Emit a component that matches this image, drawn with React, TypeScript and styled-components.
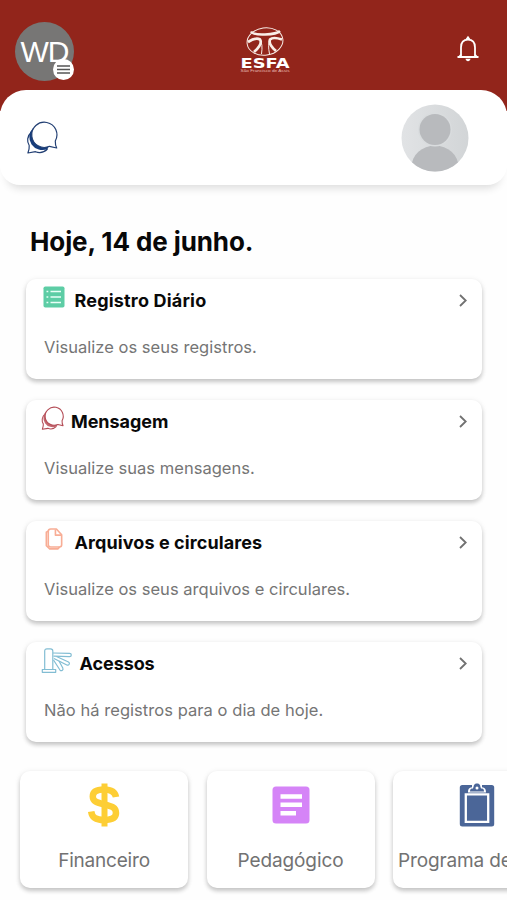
import React from "react";
import styled, { createGlobalStyle } from "styled-components";

const GlobalStyle = createGlobalStyle`
  * { box-sizing: border-box; }
  html, body { margin: 0; padding: 0; background: #fefefe; overflow: hidden; }
  body { font-family: Inter, "Liberation Sans", sans-serif; }
  svg { display: block; flex: none; overflow: visible; }
`;

const Screen = styled.main`
  width: 507px;
  height: 900px;
  overflow: hidden;
  display: flex;
  flex-direction: column;
  background: #fefefe;
`;

const Header = styled.header`
  height: 111px;
  flex: none;
  padding: 22px 26px 0 15px;
  display: grid;
  grid-template-columns: 60px 1fr 60px;
  align-items: start;
  background: #92251b;
`;

const Account = styled.button`
  position: relative;
  width: 59px;
  height: 59px;
  border: 0;
  padding: 0;
  border-radius: 50%;
  background: #777675;
  color: #fff;
  font: 400 30px/58px "Liberation Sans", sans-serif;
  letter-spacing: -1px;
`;

const MenuBadge = styled.span`
  position: absolute;
  right: 0;
  bottom: 1px;
  width: 21px;
  height: 21px;
  border-radius: 50%;
  background: #fff;
  display: grid;
  place-items: center;
`;

const Brand = styled.div`
  justify-self: center;
  margin: 5px 0 0 34px;
`;

const Bell = styled.div`
  justify-self: end;
  margin: 14px 2px 0 0;
`;

const Panel = styled.section`
  height: 95px;
  flex: none;
  margin-top: -21px;
  padding: 0 38px 0 26px;
  display: flex;
  align-items: center;
  justify-content: space-between;
  background: #fff;
  border-radius: 26px 26px 20px 20px;
  box-shadow: 0 10px 9px -7px rgba(0, 0, 0, 0.14);
`;

const Today = styled.h1`
  margin: 40px 0 0 30px;
  font-size: 26px;
  line-height: 34px;
  font-weight: 700;
  letter-spacing: -0.1px;
  color: #080808;
`;

const CardList = styled.div`
  display: flex;
  flex-direction: column;
  gap: 21px;
  margin: 20px 25px 0 26px;
`;

const raised = "0 3px 4px rgba(0,0,0,.19), 0 1px 6px rgba(0,0,0,.08)";

const Card = styled.article`
  height: 100px;
  border-radius: 10px;
  background: #fff;
  box-shadow: ${raised};
  padding: 7px 15px 0 15px;
`;

const CardHead = styled.div`
  display: flex;
  align-items: flex-start;
  height: 49px;
`;

const CardTitle = styled.h2<{ $gap: number; $tracking: number }>`
  flex: 1;
  margin: 3px 0 0 ${(p) => p.$gap}px;
  font-size: 18px;
  line-height: 24px;
  font-weight: 650;
  letter-spacing: ${(p) => p.$tracking}px;
  color: #090909;
`;

const ChevronSlot = styled.span`
  margin-top: 8px;
`;

const CardText = styled.p<{ $tracking: number }>`
  margin: 0 0 0 3px;
  font-size: 16.5px;
  line-height: 24px;
  letter-spacing: ${(p) => p.$tracking}px;
  color: #757575;
`;

const Shortcuts = styled.nav`
  display: flex;
  gap: 18.5px;
  margin: 29px 0 0 20px;
`;

const Shortcut = styled.div`
  width: 168px;
  height: 117px;
  flex: none;
  border-radius: 10px;
  background: #fff;
  box-shadow: ${raised};
  display: flex;
  flex-direction: column;
  align-items: center;
  padding-top: 12px;
`;

const ShortcutLabel = styled.span<{ $tracking: number }>`
  margin-top: 21px;
  font-size: 19px;
  line-height: 26px;
  letter-spacing: ${(p) => p.$tracking}px;
  white-space: nowrap;
  color: #727272;
`;

const ChatIcon = ({ size, color, stroke, shade }: { size: number; color: string; stroke: number; shade: string }) => (
  <svg width={size} height={size} viewBox="0 0 32 32" fill="none" stroke={color} strokeWidth={stroke} strokeLinejoin="round">
    <path d="M5.500 10C.800 14 .800 20 3.200 23.500C3.500 26.500 2.900 28.500 1.900 31L9.500 29.700C14 31.500 18.500 30 21.500 27" />
    <path d="M7 6A13 13 0 0 0 21.500 27L23 24L9 9Z" fill={shade} stroke="none" />
    <path d="M29.300 19A12.600 12.600 0 1 0 23.500 24.300L30.700 26C29.600 23.800 29.200 21.500 29.300 19Z" fill="#fff" />
  </svg>
);

const RegisterIcon = () => (
  <svg width="22" height="22" viewBox="0 0 22 22">
    <rect x=".5" y=".5" width="21" height="21" rx="1.800" fill="#5dcda5" />
    <g stroke="#e9fff7" strokeWidth="1.400">
      <path d="M7.500 5.500H18M7.500 11H18M7.500 16.500H18" />
      <path d="M3.500 5.500H5.300M3.500 11H5.300M3.500 16.500H5.300" />
    </g>
  </svg>
);

const FilesIcon = () => (
  <svg width="18" height="22" viewBox="0 0 18 23" fill="none" stroke="#f8ad95" strokeWidth="1.700" strokeLinejoin="round">
    <path d="M3 3.200L1 4.500V18.500L4.500 21.800H13L15 19.800" />
    <path d="M5.500 1H11.500L17 7V17.500C17 19 16 19.800 14.800 19.800H5.500C4 19.800 3 19 3 17.500V3.500C3 2 4 1 5.500 1Z" />
    <path d="M10.500 1.500V7.500H16.500" />
  </svg>
);

const TurnstileIcon = () => (
  <svg width="31" height="25" viewBox="0 0 31 25" fill="none" stroke="#82bdd3" strokeWidth="1.200" strokeLinejoin="round">
    <path d="M3.700 21V3Q3.700 .800 6 .800H9.500Q11.800 .800 11.800 3V21M1.300 21.500H14.700V24.300H1.300Z" />
    <path d="M12 5L28.500 5.300Q30.300 5.300 30.300 7T28.500 8.700L12.500 8.200" />
    <path d="M15.500 8.500L27.500 14Q29 15 28.200 16.300T25.800 17L13 10.500" />
    <path d="M18 13L21.800 20Q22.500 21.800 21.200 22.500T18.800 21.800L12.500 12" />
  </svg>
);

const Chevron = () => (
  <svg width="8" height="13" viewBox="0 0 8 13" fill="none" stroke="#717171" strokeWidth="1.800">
    <path d="M1 1L6.700 6.500L1 12" />
  </svg>
);

const Logo = () => (
  <svg width="50" height="46" viewBox="0 0 50 46">
    <g fill="none" stroke="#f9eee8">
      <ellipse cx="25" cy="14.500" rx="18" ry="13.700" strokeWidth="1" transform="rotate(-8 25 14.500)" />
      <path d="M11 4.500Q13 8 25 7.500T40 4" strokeWidth="2.500" />
      <path d="M8 15Q16 10 20 12.500Q23 17 14 25M42 12.500Q33 9.500 30 12.500Q28 17 36 24" strokeWidth="2.700" />
      <path d="M20 12.500Q23 17 21.500 27M30 12.500Q27.500 17 29.500 27" strokeWidth="1" />
    </g>
    <text x="25" y="40.500" textAnchor="middle" textLength="49" lengthAdjust="spacingAndGlyphs" fontFamily="DejaVu Sans" fontWeight="700" fontSize="14" fill="#fff">ESFA</text>
    <text x="25" y="45" textAnchor="middle" textLength="49" lengthAdjust="spacingAndGlyphs" fontFamily="Liberation Sans" fontSize="4.200" fill="#e7bcb3">São Francisco de Assis</text>
  </svg>
);

const BellIcon = () => (
  <svg width="22" height="26" viewBox="0 0 22 26" fill="none" stroke="#fff" strokeWidth="1.800">
    <path d="M.500 21H21.500M4 20V11.500C4 6 7 3.700 11 3.700S18 6 18 11.500V20M2.500 20.500L4.500 18M19.500 20.500L17.500 18" />
    <path d="M9.500 3.500L11 1.500L12.500 3.500" strokeWidth="2" />
    <path d="M8.500 22.800H13.500C13.200 26 8.800 26 8.500 22.800Z" fill="#fff" stroke="none" />
  </svg>
);

const Portrait = () => (
  <svg width="68" height="68" viewBox="0 0 68 68">
    <defs>
      <clipPath id="portrait"><circle cx="34" cy="34" r="33.500" /></clipPath>
      <linearGradient id="silver"><stop stopColor="#e1e3e5" /><stop offset="1" stopColor="#d2d5d7" /></linearGradient>
    </defs>
    <circle cx="34" cy="34" r="33.500" fill="url(#silver)" />
    <g clipPath="url(#portrait)" fill="#b8babd">
      <ellipse cx="34" cy="63" rx="23.500" ry="21.500" />
      <circle cx="34" cy="25.500" r="17" fill="#d9dcde" />
      <circle cx="34" cy="25.500" r="15.500" />
    </g>
  </svg>
);

const DollarIcon = () => (
  <svg width="34" height="44" viewBox="0 0 34 44" fill="none" stroke="#fdce35">
    <path d="M29 14C28 8.500 24 6.500 17 6.500C9.500 6.500 5.800 9 5.800 13.500C5.800 18.500 10 19.700 17 21.300C25 23.200 29 24.500 29 30C29 35 24.500 37 17 37C9 37 5 34.500 4.200 28.500" strokeWidth="6.500" />
    <path d="M17.500 .500V43.500" strokeWidth="6" />
  </svg>
);

const NotesIcon = () => (
  <svg width="38" height="44" viewBox="0 0 38 44">
    <rect x=".5" y="3.500" width="37" height="37" rx="3.500" fill="#d584f7" />
    <path d="M8.500 13.500H30M8.500 21.800H30M8.500 30.200H24" stroke="#fff" strokeWidth="4.500" />
  </svg>
);

const ClipboardIcon = () => (
  <svg width="36" height="44" viewBox="0 0 36 44">
    <rect x=".8" y="2" width="34.400" height="41.500" rx="2.500" fill="#4b6698" />
    <path d="M6.800 11.300H29.200V38.800H6.800Z" fill="none" stroke="#fff" strokeWidth="2.300" />
    <path d="M9 9.500C9 6 10 4.500 13 4.200V1H23V4.200C26 4.500 27 6 27 9.500Z" fill="#fff" />
    <path d="M11 8.500C11 6 12 5.500 14 5.500C15 3 14.500 .500 18 .500S21 3 22 5.500C24 5.500 25 6 25 8.500Z" fill="#4b6698" />
    <circle cx="18" cy="5" r="1.500" fill="#fff" />
  </svg>
);

const entries = [
  { title: "Registro Diário", text: "Visualize os seus registros.", icon: <RegisterIcon />, inset: 2, lift: 0, gap: 9.5, track: 0.18, bodyTrack: 0.03 },
  { title: "Mensagem", text: "Visualize suas mensagens.", icon: <ChatIcon size={23} color="#b34b55" stroke={1.5} shade="#c3666e" />, inset: 0, lift: 0, gap: 7, track: -0.06, bodyTrack: 0.03 },
  { title: "Arquivos e circulares", text: "Visualize os seus arquivos e circulares.", icon: <FilesIcon />, inset: 4, lift: 0, gap: 11.5, track: 0.09, bodyTrack: 0.02 },
  { title: "Acessos", text: "Não há registros para o dia de hoje.", icon: <TurnstileIcon />, inset: 0, lift: 1, gap: 7.5, track: -0.07, bodyTrack: 0.05 },
];

const IconSlot = styled.span<{ $inset: number; $lift: number }>`
  margin: ${(p) => -p.$lift}px 0 0 ${(p) => p.$inset}px;
`;

const shortcuts = [
  { label: "Financeiro", icon: <DollarIcon />, track: -0.2 },
  { label: "Pedagógico", icon: <NotesIcon />, track: -0.1 },
  { label: "Programa de Aula", icon: <ClipboardIcon />, track: -0.15 },
];

export default function App() {
  return (
    <>
      <GlobalStyle />
      <Screen>
        <Header>
          <Account aria-label="Menu da conta">
            WD
            <MenuBadge>
              <svg width="13" height="9" viewBox="0 0 13 9" stroke="#555" strokeWidth="1.300"><path d="M0 1H13M0 4.500H13M0 8H13" /></svg>
            </MenuBadge>
          </Account>
          <Brand><Logo /></Brand>
          <Bell><BellIcon /></Bell>
        </Header>
        <Panel>
          <ChatIcon size={32} color="#223f73" stroke={1.2} shade="#173d7c" />
          <Portrait />
        </Panel>
        <Today>Hoje, 14 de junho.</Today>
        <CardList>
          {entries.map((e) => (
            <Card key={e.title}>
              <CardHead>
                <IconSlot $inset={e.inset} $lift={e.lift}>{e.icon}</IconSlot>
                <CardTitle $gap={e.gap} $tracking={e.track}>{e.title}</CardTitle>
                <ChevronSlot><Chevron /></ChevronSlot>
              </CardHead>
              <CardText $tracking={e.bodyTrack}>{e.text}</CardText>
            </Card>
          ))}
        </CardList>
        <Shortcuts>
          {shortcuts.map((s) => (
            <Shortcut key={s.label}>
              {s.icon}
              <ShortcutLabel $tracking={s.track}>{s.label}</ShortcutLabel>
            </Shortcut>
          ))}
        </Shortcuts>
      </Screen>
    </>
  );
}
